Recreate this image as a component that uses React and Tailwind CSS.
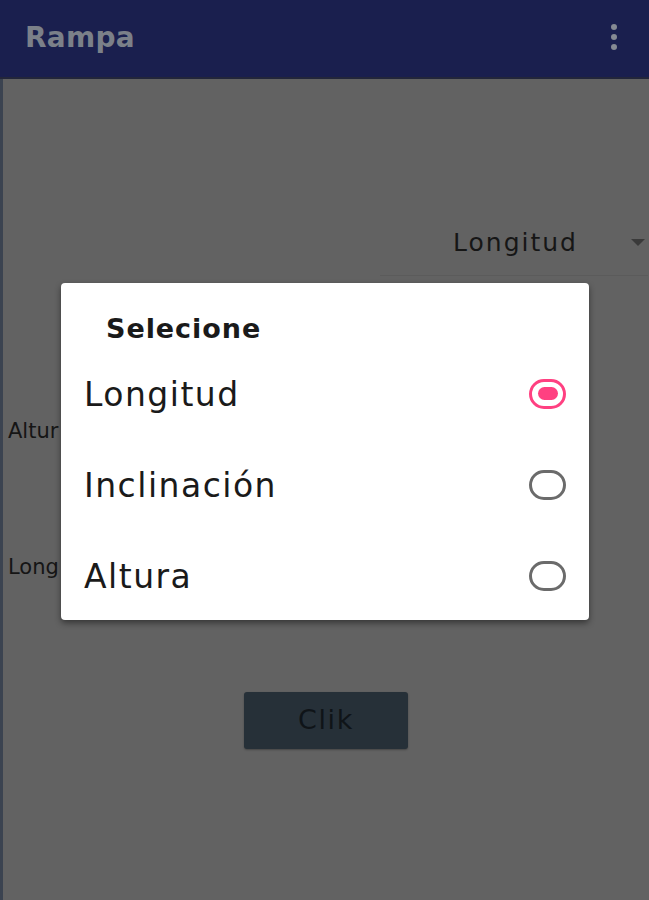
import React from "react";

const F = { fontFamily: '"DejaVu Sans", "Liberation Sans", sans-serif' };

function Radio({ checked }) {
  if (checked) {
    return (
      <div className="w-[37px] h-[30px] rounded-full border-[3px] border-[#ff4081] flex items-center justify-center">
        <div className="w-[20px] h-[13px] rounded-full bg-[#ff4081]" />
      </div>
    );
  }
  return <div className="w-[37px] h-[30px] rounded-full border-[3px] border-[#6b6b6b]" />;
}

export default function App() {
  const options = [
    { label: "Longitud", checked: true },
    { label: "Inclinación", checked: false },
    { label: "Altura", checked: false },
  ];
  return (
    <div className="relative w-[649px] h-[900px] overflow-hidden bg-[#626262] flex flex-col" style={F}>
      <header className="h-[79px] shrink-0 bg-[#1a1f4e] flex items-center pl-[25px] pr-[32px] border-b-2 border-[#23263a]">
        <span className="text-[28px] font-bold text-[#7b8089] tracking-[0.01em] leading-none mt-[-2px]">Rampa</span>
        <div className="ml-auto flex flex-col gap-[4px] items-center mt-[-4px]">
          <span className="w-[6px] h-[6px] rounded-full bg-[#858a93]" />
          <span className="w-[6px] h-[6px] rounded-full bg-[#858a93]" />
          <span className="w-[6px] h-[6px] rounded-full bg-[#858a93]" />
        </div>
      </header>

      <main className="flex-1 flex flex-col border-l-[3px] border-[#3b4350]">
        <div className="mt-[131px] ml-[377px] w-[268px] h-[66px] flex items-center border-b border-[#5b5b5b]">
          <span className="pl-[73px] text-[25px] text-[#161616] tracking-[0.08em] leading-none">Longitud</span>
          <span className="ml-auto mr-[3px] w-0 h-0 border-l-[7px] border-r-[7px] border-t-[7px] border-l-transparent border-r-transparent border-t-[#3a3a3a]" />
        </div>

        <div className="mt-[143px] pl-[5px] w-[56px] overflow-hidden whitespace-nowrap text-[21px] leading-[24px] text-[#151515]">Altura</div>
        <div className="mt-[112px] pl-[5px] w-[56px] overflow-hidden whitespace-nowrap text-[21px] leading-[24px] text-[#151515]">Longitud</div>

        <button className="mt-[113px] mx-auto w-[164px] h-[57px] rounded-[3px] bg-[#263038] text-[27px] text-[#0f1418] tracking-[0.06em] flex items-center justify-center shadow-[0_1px_2px_rgba(0,0,0,0.3)]">
          Clik
        </button>
      </main>

      <div className="absolute left-[61px] top-[283px] w-[528px] h-[337px] overflow-hidden bg-white rounded-[4px] shadow-[0_3px_6px_rgba(0,0,0,0.45)] flex flex-col">
        <div className="pl-[45px] pt-[30px] h-[66px] shrink-0 text-[27px] font-bold text-[#1a1a1a] tracking-[0.035em] leading-[32px]">Selecione</div>
        {options.map((o) => (
          <div key={o.label} className="h-[91px] shrink-0 flex items-center pl-[23px] pr-[23px]">
            <span className="text-[33px] text-[#1a1a1a] tracking-[0.045em] leading-none">{o.label}</span>
            <div className="ml-auto mt-[-2px]">
              <Radio checked={o.checked} />
            </div>
          </div>
        ))}
      </div>
    </div>
  );
}
